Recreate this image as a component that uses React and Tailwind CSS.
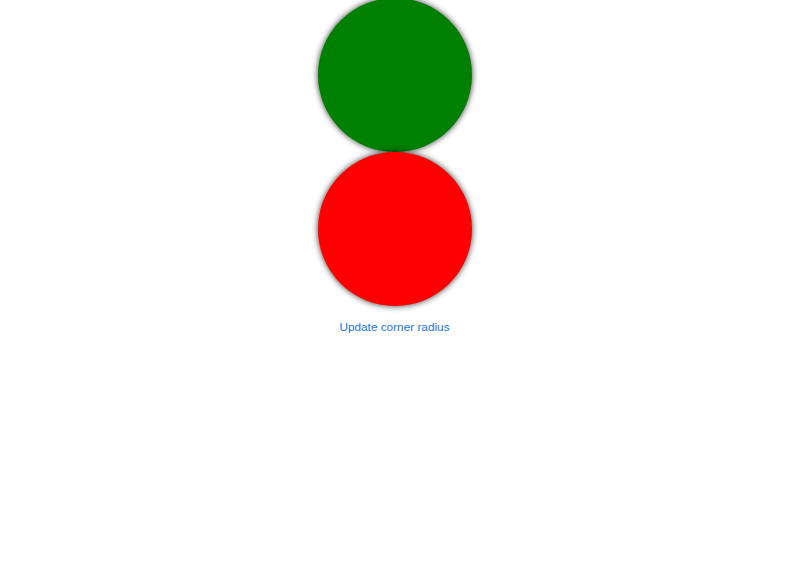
export default function App() {
  return (
    <div className="w-[789px] h-[563px] bg-white overflow-hidden rounded-b-[10px] flex flex-col items-center">
      <div className="-mt-[2px] w-[154px] h-[154px] rounded-full bg-[#008000] shadow-[0_0_6px_rgba(0,0,0,0.8)]" />
      <div className="mt-0 w-[154px] h-[154px] rounded-full bg-[#ff0000] shadow-[0_0_6px_rgba(0,0,0,0.8)]" />
      <button
        className="mt-[14px] text-[11.8px] leading-[15px] text-[#1a73e8] bg-transparent"
        style={{ fontFamily: '"Liberation Sans", Arial, sans-serif' }}
      >
        Update corner radius
      </button>
    </div>
  );
}
